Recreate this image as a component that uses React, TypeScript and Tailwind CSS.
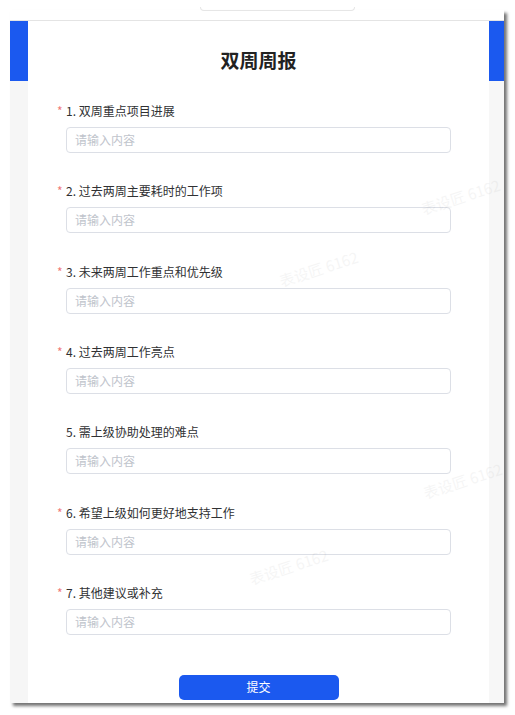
import React from "react";

const questions = [
  { no: 1, title: "双周重点项目进展", required: true },
  { no: 2, title: "过去两周主要耗时的工作项", required: true },
  { no: 3, title: "未来两周工作重点和优先级", required: true },
  { no: 4, title: "过去两周工作亮点", required: true },
  { no: 5, title: "需上级协助处理的难点", required: false },
  { no: 6, title: "希望上级如何更好地支持工作", required: true },
  { no: 7, title: "其他建议或补充", required: true },
];

// faint watermarks sitting over the form
const marks = [
  { left: 420, top: 186 },
  { left: 278, top: 258 },
  { left: 422, top: 470 },
  { left: 248, top: 556 },
];

function Field({ no, title, required }: { no: number; title: string; required: boolean }) {
  return (
    <div className="flex flex-col">
      <div className="flex h-[18px] items-center text-[12px] leading-[18px] text-[#303133]">
        <span className="-ml-[9px] w-[9px] text-[#f07a7a]">{required ? "*" : ""}</span>
        <span>
          {no}. {title}
        </span>
      </div>
      <div className="mt-[7px] flex h-[26px] w-[385px] items-center rounded-[4px] border border-[#dcdfe6] bg-white px-[8px] text-[12px] text-[#c0c4cc]">
        请输入内容
      </div>
    </div>
  );
}

export default function App() {
  return (
    <div
      className="relative h-[715px] w-[515px] overflow-hidden bg-white pl-[10px] pt-[10px]"
      style={{ fontFamily: '"Noto Sans CJK SC", "Noto Sans", sans-serif' }}
    >
      <div className="flex h-[693px] w-[494px] flex-col bg-[#fafafa] shadow-[3px_3px_3px_rgba(0,0,0,0.55)]">
        {/* top strip */}
        <div className="flex h-[11px] border-b border-[#e4e4e4] bg-white pl-[190px]">
          <div className="-mt-[3px] h-[4px] w-[155px] rounded-b-[4px] border border-t-0 border-[#e6e6e6]" />
        </div>

        <div className="flex flex-1">
          <div className="flex w-[18px] flex-col bg-[#f6f6f6]">
            <div className="h-[60px] bg-[#1b59ef]" />
          </div>

          <div className="flex w-[461px] flex-col items-center bg-white pt-[25px]">
            <div className="h-[28px] text-[19px] font-bold leading-[28px] text-[#222]">双周周报</div>

            <div className="mt-[28px] flex w-full flex-col gap-[29.33px] pl-[38px]">
              {questions.map((q) => (
                <Field key={q.no} {...q} />
              ))}
            </div>

            <button className="mt-[40px] h-[25px] w-[160px] rounded-[5px] bg-[#1b59ef] text-[12px] text-white">
              提交
            </button>
          </div>

          <div className="flex w-[15px] flex-col bg-[#f7f7f7]">
            <div className="h-[60px] bg-[#1b59ef]" />
          </div>
        </div>
      </div>

      {marks.map((m, i) => (
        <div
          key={i}
          className="pointer-events-none absolute -rotate-[18deg] text-[15px] text-[#000] opacity-[0.035]"
          style={{ left: m.left, top: m.top }}
        >
          表设匠 6162
        </div>
      ))}
    </div>
  );
}
